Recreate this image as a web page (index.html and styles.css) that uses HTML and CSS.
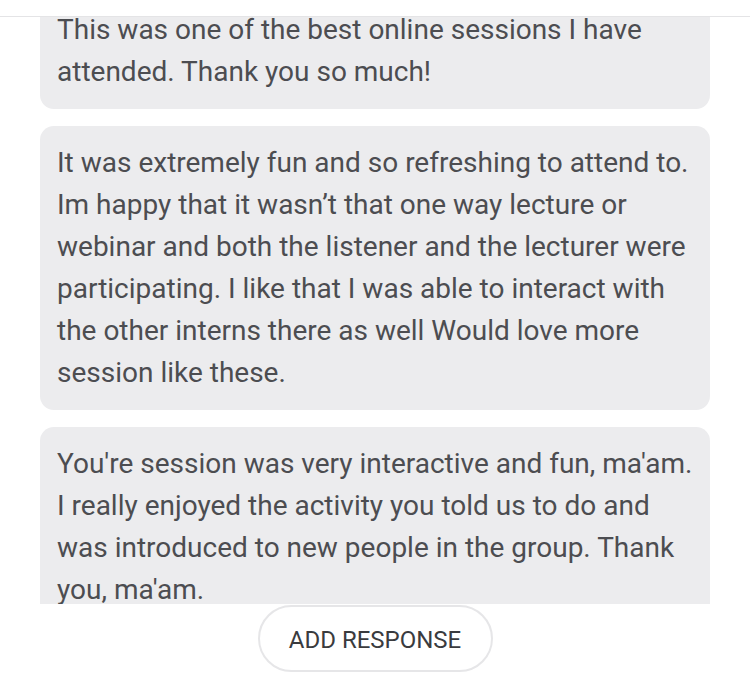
FILE: index.html
```html
<!DOCTYPE html>
<html>
<head>
<meta charset="utf-8">
<link rel="stylesheet" href="styles.css">
</head>
<body>
<div class="page">
  <div class="topbar"></div>
  <div class="list">
    <div class="items">
      <div class="card first">This was one of the best online sessions I have<br>attended. Thank you so much!</div>
      <div class="card">It was extremely fun and so refreshing to attend to.<br>Im happy that it wasn’t that one way lecture or<br>webinar and both the listener and the lecturer were<br>participating. I like that I was able to interact with<br>the other interns there as well Would love more<br>session like these.</div>
      <div class="card">You're session was very interactive and fun, ma'am.<br>I really enjoyed the activity you told us to do and<br>was introduced to new people in the group. Thank<br>you, ma'am.</div>
    </div>
  </div>
  <div class="footer">
    <button class="add">ADD RESPONSE</button>
  </div>
</div>
</body>
</html>
```

FILE: styles.css
```css
html, body {
  margin: 0;
  padding: 0;
  background: #ffffff;
}
.page {
  width: 750px;
  height: 700px;
  display: flex;
  flex-direction: column;
  font-family: Roboto, "Liberation Sans", sans-serif;
}
.topbar {
  height: 16px;
  border-bottom: 1px solid #e4e4e6;
  flex: none;
}
.list {
  height: 587px;
  overflow: hidden;
  flex: none;
}
.items {
  display: flex;
  flex-direction: column;
  gap: 17px;
  padding: 0 40px;
  margin-top: -24px;
}
.card {
  background: #ececee;
  border-radius: 14px;
  padding: 16px 10px 16px 17px;
  font-size: 28px;
  line-height: 42px;
  color: #4c4d51;
  white-space: nowrap;
}
.footer {
  display: flex;
  justify-content: center;
  padding-top: 1px;
}
.add {
  width: 235px;
  height: 67px;
  border-radius: 34px;
  background: #ffffff;
  border: 2px solid #e6e6e8;
  font-family: Roboto, "Liberation Sans", sans-serif;
  font-size: 24px;
  color: #3a3b3e;
  padding: 3px 0 0;
}
```
